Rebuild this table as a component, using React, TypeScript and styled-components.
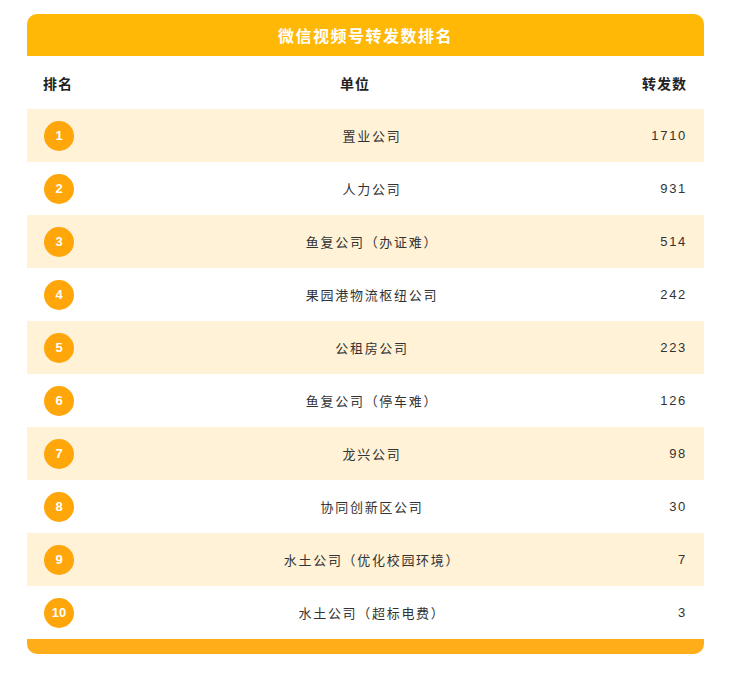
import React from 'react';
import styled, { createGlobalStyle } from 'styled-components';

const rows = [
  { unit: '置业公司', count: 1710 },
  { unit: '人力公司', count: 931 },
  { unit: '鱼复公司（办证难）', count: 514 },
  { unit: '果园港物流枢纽公司', count: 242 },
  { unit: '公租房公司', count: 223 },
  { unit: '鱼复公司（停车难）', count: 126 },
  { unit: '龙兴公司', count: 98 },
  { unit: '协同创新区公司', count: 30 },
  { unit: '水土公司（优化校园环境）', count: 7 },
  { unit: '水土公司（超标电费）', count: 3 },
];

const GlobalStyle = createGlobalStyle`
  body {
    margin: 0;
    background: #fff;
    font-family: "Liberation Sans", Arial, "Noto Sans CJK SC", sans-serif;
  }
`;

const Page = styled.div`
  padding: 14px 0 0 27px;
`;

const Card = styled.div`
  width: 677px;
`;

const Title = styled.div`
  height: 42px;
  background: #ffb805;
  border-radius: 10px 10px 0 0;
  display: flex;
  align-items: center;
  justify-content: center;
  color: #fff;
  font-size: 16px;
  font-weight: bold;
  letter-spacing: 1.5px;
`;

const Row = styled.div<{ $head?: boolean; $shade?: boolean }>`
  display: grid;
  grid-template-columns: ${p => (p.$head ? '80px 1fr 100px' : '100px 1fr 86px')};
  align-items: center;
  height: 53px;
  padding: 0 17px 0 16px;
  background: ${p => (p.$shade ? '#fff2d7' : '#fff')};
  color: ${p => (p.$head ? '#222' : '#333')};
  font-size: ${p => (p.$head ? '14px' : '13px')};
  font-weight: ${p => (p.$head ? 'bold' : 'normal')};
  letter-spacing: ${p => (p.$head ? '1px' : '1.7px')};
`;

const Cell = styled.div<{ $align: 'left' | 'center' | 'right' }>`
  text-align: ${p => p.$align};
  white-space: nowrap;
`;

const Rank = styled.div`
  width: 30px;
  height: 30px;
  margin-left: 1px;
  border-radius: 50%;
  background: #ffa60a;
  color: #fff;
  font-size: 13px;
  font-weight: bold;
  letter-spacing: 0;
  display: flex;
  align-items: center;
  justify-content: center;
`;

const Footer = styled.div`
  height: 15px;
  background: #ffae1a;
  border-radius: 0 0 10px 10px;
`;

export default function App() {
  return (
    <Page>
      <GlobalStyle />
      <Card>
        <Title>微信视频号转发数排名</Title>
        <Row $head>
          <Cell $align="left">排名</Cell>
          <Cell $align="center">单位</Cell>
          <Cell $align="right">转发数</Cell>
        </Row>
        {rows.map((r, i) => (
          <Row key={r.unit} $shade={i % 2 === 0}>
            <Rank>{i + 1}</Rank>
            <Cell $align="center">{r.unit}</Cell>
            <Cell $align="right">{r.count}</Cell>
          </Row>
        ))}
        <Footer />
      </Card>
    </Page>
  );
}
